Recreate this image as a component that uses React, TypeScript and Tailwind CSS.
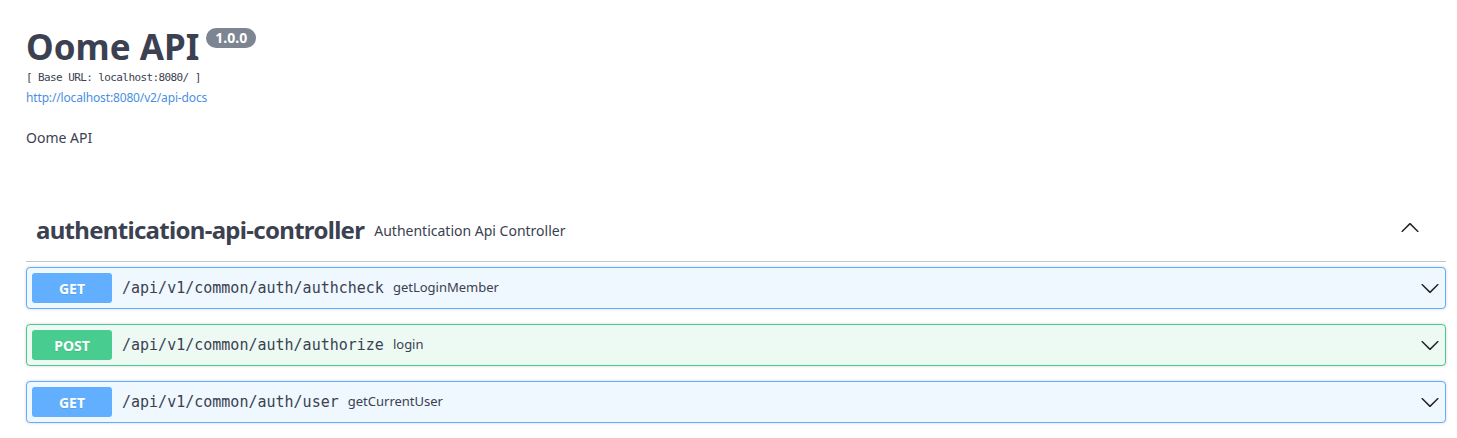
import React from "react";

const sans = { fontFamily: '"Noto Sans", "Open Sans", sans-serif' };
const mono = { fontFamily: '"DejaVu Sans Mono", "Liberation Mono", monospace' };

function Chevron({ up = false }: { up?: boolean }) {
  return (
    <svg
      width="20"
      height="20"
      viewBox="0 0 20 20"
      className={up ? "rotate-180" : ""}
      fill="#222"
    >
      <path d="M17.418 6.109c.272-.268.709-.268.979 0s.271.701 0 .969l-7.908 7.83c-.27.268-.707.268-.979 0l-7.908-7.83c-.27-.268-.27-.701 0-.969.271-.268.709-.268.979 0L10 13.25l7.418-7.141z" />
    </svg>
  );
}

type Op = { method: "GET" | "POST"; path: string; summary: string };

const ops: Op[] = [
  { method: "GET", path: "/api/v1/common/auth/authcheck", summary: "getLoginMember" },
  { method: "POST", path: "/api/v1/common/auth/authorize", summary: "login" },
  { method: "GET", path: "/api/v1/common/auth/user", summary: "getCurrentUser" },
];

function OpBlock({ op }: { op: Op }) {
  const isGet = op.method === "GET";
  return (
    <div
      className={
        "mt-[5px] mb-[15px] rounded-[4px] border shadow-[0_0_3px_rgba(0,0,0,0.19)] " +
        (isGet ? "border-[#61affe] bg-[#eff7ff]" : "border-[#49cc90] bg-[#edfaf4]")
      }
    >
      <div className="flex items-center p-[5px]">
        <div
          className={
            "flex h-[30px] w-[80px] items-center justify-center rounded-[3px] text-[14px] font-bold text-white [text-shadow:0_1px_0_rgba(0,0,0,0.1)] " +
            (isGet ? "bg-[#61affe]" : "bg-[#49cc90]")
          }
          style={sans}
        >
          {op.method}
        </div>
        <span className="ml-[10px] text-[15px] font-medium text-[#3b4151]" style={mono}>
          {op.path}
        </span>
        <span className="ml-[9px] text-[13px] text-[#3b4151]" style={sans}>
          {op.summary}
        </span>
        <div className="ml-auto flex">
          <Chevron />
        </div>
      </div>
    </div>
  );
}

export default function App() {
  return (
    <div className="min-h-[438px] bg-white pl-[26px] pr-[11px] text-[#3b4151]" style={sans}>
      <div className="pt-[27px]">
        <div className="flex items-start">
          <h2 className="text-[35px] font-bold leading-[40px] text-[#3b4151]">Oome API</h2>
          <span className="ml-[7px] mt-[1px] h-[20px] rounded-full bg-[#7d8492] px-[9px] text-[14px] font-bold leading-[20px] text-white">
            1.0.0
          </span>
        </div>
        <div className="mt-[4px] text-[11px] leading-[14px] tracking-[-0.6px]" style={mono}>
          [ Base URL: localhost:8080/ ]
        </div>
        <div className="mt-[5px] text-[12px] leading-[16px] tracking-[-0.15px]">
          <a className="text-[#4990e2]">http://localhost:8080/v2/api-docs</a>
        </div>
        <div className="mt-[22px] text-[14px] leading-[20px]">Oome API</div>
      </div>

      <div className="mt-[51px]">
        <div className="flex h-[63px] items-center border-b border-[#3b4151]/30 pl-[10px] pr-[26px]">
          <span className="text-[24px] font-bold leading-[30px] tracking-[-0.7px]">
            authentication-api-controller
          </span>
          <span className="ml-[10px] text-[14px]">Authentication Api Controller</span>
          <div className="mb-[5px] ml-auto flex">
            <Chevron up />
          </div>
        </div>
        {ops.map((op) => (
          <OpBlock key={op.path} op={op} />
        ))}
      </div>
    </div>
  );
}
